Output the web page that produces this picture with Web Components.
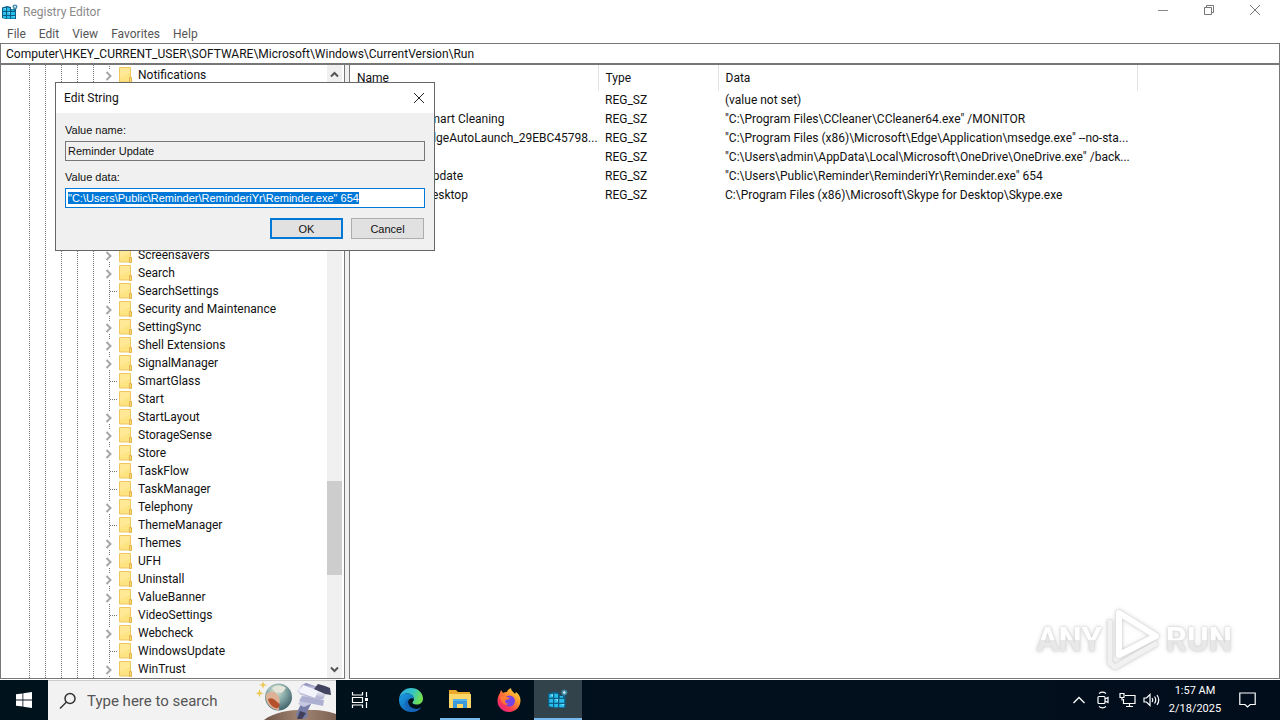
<!DOCTYPE html>
<html lang="en">
<head>
<meta charset="utf-8">
<title>Registry Editor</title>
<style>
  html, body { height: 100%; margin: 0; }
  body { font: 12px/18px Roboto, "Liberation Sans", sans-serif; color: #111; background: #fff; overflow: hidden; }
</style>
</head>
<body>
<win-desktop></win-desktop>

<template id="t-desktop">
  <style>
    :host { display: flex; flex-direction: column; height: 100vh; position: relative; }
    reg-editor { flex: 1; min-height: 0; }
    edit-dialog { position: absolute; left: 55px; top: 82px; }
    run-watermark { position: absolute; right: 48px; bottom: 44px; }
  </style>
  <reg-editor></reg-editor>
  <task-bar></task-bar>
  <run-watermark></run-watermark>
  <edit-dialog></edit-dialog>
</template>

<template id="t-editor">
  <style>
    :host { display: flex; flex-direction: column; }
    header { display: flex; align-items: center; height: 24px; padding-left: 2px; gap: 5px; color: #8a8a8a; }
    h1 { flex: 1; margin: 0; font: inherit; }
    .ctl { display: flex; gap: 1px; padding: 0 3px 4px 0; }
    .ctl button { all: unset; width: 45px; height: 20px; display: grid; place-items: center; }
    nav { display: flex; gap: 13px; height: 19px; padding-left: 7px; }
    nav button { all: unset; color: #555; line-height: 18px; }
    .addr { box-sizing: border-box; height: 21px; width: 100%; border: 1px solid #777; padding: 0 5px; font: inherit; color: #111; background: #fff; outline: none; display: block; }
    main { flex: 1; min-height: 0; display: flex; border-top: 1px solid #777; margin-bottom: 1px; background: #f0f0f0; gap: 4px; }
    key-tree { width: 345px; flex: none; box-sizing: border-box; }
    value-list { flex: 1; min-width: 0; }
  </style>
  <header>
    <reg-icon></reg-icon>
    <h1>Registry Editor</h1>
    <div class="ctl">
      <button aria-label="Minimize"><svg width="12" height="12" stroke="#888" fill="none"><path d="M1 6.500h10"/></svg></button>
      <button aria-label="Restore"><svg width="12" height="12" stroke="#777" fill="none"><path d="M1.500 3.500h7v7h-7zM3.500 3.500v-2h7v7h-2"/></svg></button>
      <button aria-label="Close"><svg width="12" height="12" stroke="#777" fill="none"><path d="M1 1l10 10M11 1L1 11"/></svg></button>
    </div>
  </header>
  <nav><button>File</button><button>Edit</button><button>View</button><button>Favorites</button><button>Help</button></nav>
  <input class="addr" aria-label="Address" value="Computer\HKEY_CURRENT_USER\SOFTWARE\Microsoft\Windows\CurrentVersion\Run">
  <main><key-tree></key-tree><value-list></value-list></main>
</template>

<template id="t-regicon">
  <style>:host { display: block; width: 16px; height: 16px; } svg { display: block; width: 100%; height: 100%; }</style>
  <svg viewBox="0 0 16 16">
    <path d="M0 3.500L5 2l4 1v2h5v10H4l-4-1z" fill="#0b5f86"/>
    <path d="M1 4.300l3-.6v3L1 7zM5 3.600l3 .3v3H5zM1 8h3v3H1zM5 8h3v3H5zM9 8h4v3H9zM1 12h3v2.300l-3-.6zM5 12h3v2.500H5zM9 12h4v2.500H9zM9.500 5.500H12V7H9.500z" fill="#28bdea"/>
    <path d="M2 4.500l2-.4v2zM6 8h2v2zM10 12h3v1z" fill="#8fe6ff"/>
    <path d="M13 0l.7 1 1.300-.2-.1 1.300 1.100.7-1.100.8.1 1.200-1.300-.1-.7 1.100-.8-1.100-1.200.1.100-1.200L10 2.800l1.100-.7-.1-1.300 1.200.2z" fill="#3f87a6"/>
    <circle cx="13" cy="2.800" r="1" fill="#dff6ff"/>
  </svg>
</template>

<template id="t-tree">
  <style>
    :host { display: flex; background: #fff; border: solid #777; border-width: 0 1px 1px; overflow: hidden; }
    ul { flex: 1; min-width: 0; margin: 0; padding: 1px 0 0 28px; list-style: none;
      background: repeating-linear-gradient(#0000 0 1px, #fff 1px 2px), repeating-linear-gradient(90deg, #777 0 1px, #fff 1px 16px);
      background-size: auto, 66px 100%; background-position: 0 0, 28px 0; background-repeat: repeat, no-repeat; }
    .gap { height: 162px; }
    .bar { width: 15px; margin-right: 2px; background: #f0f0f0; display: grid; grid-template-rows: 18px 1fr 17px; }
    .bar i { display: block; margin-top: 398px; height: 94px; background: #cdcdcd; }
    svg { display: block; margin: 5px 3px 4px; }
    svg + div + svg { margin-top: 4px; }
  </style>
  <ul></ul>
  <div class="bar">
    <svg width="9" height="9" fill="none" stroke="#555" stroke-width="2"><path d="M1 6.500l3.500-3.500L8 6.500"/></svg>
    <div><i></i></div>
    <svg width="9" height="9" fill="none" stroke="#555" stroke-width="2"><path d="M1 2.500L4.500 6 8 2.500"/></svg>
  </div>
</template>

<template id="t-key">
  <style>
    :host { display: flex; align-items: center; height: 18px; padding-left: 75px; }
    .join { width: 15px; height: 18px; display: block; flex: none; }
    .leaf, :host([leaf]) .branch { display: none; }
    :host([leaf]) .leaf { display: inline; }
    .folder { width: 14px; height: 16px; margin-right: 5px; flex: none; }
  </style>
  <svg class="join" fill="none">
    <g class="leaf" stroke="#777" stroke-dasharray="1 1"><path d="M5.500 0v18M6 9.500h8"/></g>
    <g class="branch"><path d="M5.500 0v3M5.500 16v2" stroke="#777" stroke-dasharray="1 1"/><path d="M2.500 6l4 4-4 4" stroke="#a6a6a6" stroke-width="2"/></g>
  </svg>
  <svg class="folder" viewBox="0 0 14 16">
    <path d="M.5.500h11v14.500H.5z" fill="#fee383" stroke="#efc75c"/>
    <path d="M1 1h10v5L1 11z" fill="#ffedaa" opacity=".5"/>
    <path d="M10.500 10.500h2v5h-2z" fill="#fbd970" stroke="#e2b44f"/>
  </svg>
  <slot></slot>
</template>

<template id="t-values">
  <style>
    :host { display: block; background: #fff; border: solid #777; border-width: 0 1px 1px; overflow: hidden; }
    table { table-layout: fixed; width: 788px; border-collapse: collapse; }
    th, td { font-weight: 400; text-align: left; white-space: nowrap; overflow: hidden; padding: 0 6px; line-height: 19px; height: 19px; box-sizing: border-box; }
    th { height: 26px; border-right: 1px solid #e2e2e2; padding-left: 7px; }
    td { padding-left: 7px; }
    td:first-child { padding: 0 0 0 21px; }
    .n { width: 248px; } .t { width: 120px; }
  </style>
  <table>
    <colgroup><col class="n"><col class="t"><col></colgroup>
    <thead><tr><th>Name</th><th>Type</th><th>Data</th></tr></thead>
    <tbody></tbody>
  </table>
</template>

<template id="t-dialog">
  <style>
    :host { display: block; box-sizing: border-box; width: 380px; height: 169px; border: 1px solid #666; background: #f0f0f0; }
    header { display: flex; align-items: center; justify-content: space-between; height: 30px; padding: 0 8px; background: #fff; }
    h2 { font: inherit; margin: 0; }
    button { font: inherit; color: #111; }
    header button { all: unset; width: 14px; height: 14px; display: grid; place-items: center; }
    form { font: 11px/14px "Liberation Sans", Arial, sans-serif; padding: 10px 9px 0; }
    label { display: block; margin-bottom: 4px; }
    input { display: block; box-sizing: border-box; width: 100%; height: 20px; border: 1px solid #777; padding: 0 2px; margin: 0 0 9px; font: inherit; color: #111; background: #f0f0f0; outline: none; }
    input.on { border-color: #0078d7; background: #fff; }
    input::selection { background: #0078d7; color: #fff; }
    .row { display: flex; justify-content: flex-end; gap: 8px; padding: 1px 1px 0 0; }
    .row button { width: 73px; height: 21px; padding: 0; border: 1px solid #adadad; background: #e1e1e1; border-radius: 0; }
    .row .def { border: 2px solid #0078d7; }
  </style>
  <header><h2>Edit String</h2>
    <button aria-label="Close"><svg width="12" height="12" stroke="#222" fill="none"><path d="M1 1l10 10M11 1L1 11"/></svg></button>
  </header>
  <form>
    <label for="name">Value name:</label>
    <input id="name" readonly value="Reminder Update">
    <label for="data">Value data:</label>
    <input id="data" class="on" spellcheck="false">
    <div class="row"><button type="button" class="def">OK</button><button type="button">Cancel</button></div>
  </form>
</template>

<template id="t-taskbar">
  <style>
    :host { display: flex; height: 40px; background: linear-gradient(90deg, #00131c, #020d1c); color: #fff; }
    button { all: unset; display: grid; place-items: center; width: 48px; height: 40px; box-sizing: border-box; }
    .search { display: flex; align-items: center; width: 288px; box-sizing: border-box; background: #f2f2f2; border-top: 1px solid #ccc; padding-left: 11px; }
    .search input { flex: 1; min-width: 0; border: 0; padding: 0 0 0 10px; background: none; font: 15px/20px Roboto, sans-serif; outline: none; }
    .search input::placeholder { color: #555; opacity: 1; }
    .apps { display: flex; gap: 1px; flex: 1; }
    .apps button:first-child { margin-right: 2px; }
    .open { border-bottom: 2px solid #76b9ed; width: 40px; margin: 0 4px; }
    .active { background: #33434c; border-bottom: 2px solid #76b9ed; }
    .active reg-icon { width: 20px; height: 20px; }
    .tray { display: flex; align-items: center; }
    .tray button { width: 24px; }
    .tray .clock { width: 64px; text-align: center; font-size: 11px; line-height: 18px; }
    .tray .note { width: 40px; margin-right: 13px; }
    svg { display: block; }
  </style>
  <button aria-label="Start"><svg width="16" height="16" fill="#fff"><path d="M0 2.300l6.500-.9v6.200H0zM7.300 1.300L16 0v7.600H7.300zM0 8.400h6.500v6.200L0 13.700zM7.300 8.400H16V16l-8.700-1.300z"/></svg></button>
  <div class="search">
    <svg width="18" height="18" fill="none" stroke="#333" stroke-width="1.500"><circle cx="11" cy="6.500" r="5"/><path d="M7.500 10L1 16.500"/></svg>
    <input aria-label="Search" placeholder="Type here to search">
    <svg width="80" height="39" viewBox="256 681 80 39">
      <defs>
        <radialGradient id="pl" cx=".4" cy=".3" r=".8"><stop offset="0" stop-color="#dfe8dc"/><stop offset=".4" stop-color="#8fb0ad"/><stop offset="1" stop-color="#31545e"/></radialGradient>
        <linearGradient id="hill" x1="0" x2="1"><stop offset="0" stop-color="#6f5549"/><stop offset=".5" stop-color="#a28571"/><stop offset="1" stop-color="#7d6254"/></linearGradient>
        <linearGradient id="tube" x1="0.200" y1="0" x2="0" y2="1"><stop offset="0" stop-color="#8486b5"/><stop offset=".4" stop-color="#ededf8"/><stop offset="1" stop-color="#8e90b8"/></linearGradient>
      </defs>
      <path d="M264 720c12-9 30-11 48-10 10 0 18 2 24 4v6z" fill="url(#hill)"/>
      <circle cx="278.500" cy="697" r="13.500" fill="url(#pl)"/>
      <path d="M266 695c2-3 7-5 10-2s5 7 3 11 1 4 0 6c-8 0-14-7-13-15z" fill="#dcb195"/>
      <path d="M268 699c4-2 6 0 8 2s5 3 3 6-9 0-11-8z" fill="#b5502c"/>
      <path d="M272 688c5-4 10-3 14 0-2 2-2 4-5 5-3-1-7-1-9-5z" fill="#e4e5d8"/>
      <path d="M263 681l1 3 3 1-3 1-1 3-1-3-3-1 3-1zM259.500 689l1 3 3 1.500-3 1-1 3-1-3-2.500-1 2.500-1.500z" fill="#eac95a"/>
      <path d="M302 702l9 2-4 8c2 4 0 7-5 7s-7-3-5-7z" fill="#777ba5"/>
      <path d="M300 711l6 2-4 6h-5z" fill="#40405c"/>
      <path d="M303 697l16-7 6 3-1 5-20 9-6-3z" fill="#c6c7e2"/>
      <path d="M302 685l4-2 12 4 8 6-3 6-8-1-14-3-4-4z" fill="url(#tube)"/>
      <path d="M303 685l-4 7 16 6 3-7z" fill="#f3f3fc"/>
      <path d="M299 701l24 5 1-6-22-4z" fill="#aeb0d2"/>
      <path d="M314 689l4-5 7 2 5 2 1 7-6-1z" fill="#42435f"/>
    </svg>
  </div>
  <div class="apps">
    <button aria-label="Task View"><svg width="18" height="18" fill="none" stroke="#fff" stroke-width="1.200"><path d="M1.500 1v3h10V1M1.500 6.500h10v5h-10zM1.500 17v-3h10v3M15.500 1v5M15.500 11v6"/><path d="M14 7h3v3h-3z" fill="#fff" stroke="none"/></svg></button>
    <button aria-label="Edge"><svg width="26" height="26" viewBox="0 0 26 26">
      <defs><linearGradient id="e1" x1="0" y1="0" x2="1" y2=".3"><stop offset="0" stop-color="#2fa8ea"/><stop offset=".6" stop-color="#36c6c4"/><stop offset="1" stop-color="#6fdf55"/></linearGradient>
      <linearGradient id="e2" x1="0" y1="0" x2="1" y2="1"><stop offset="0" stop-color="#1b9de2"/><stop offset="1" stop-color="#0c50a4"/></linearGradient></defs>
      <path d="M1 12C2 5 7 1 13 1c7 0 12 5 12 10.500 0 4-3 6-6.500 6-3 0-4-1-4-2 0-.8 1.500-1.500 1.500-3.500C16 9 13 6.500 9 6.500 5 6.500 2 9 1 12z" fill="url(#e1)"/>
      <path d="M1 12c1-3.500 4-5.500 8-5.500S16 9 16 12c-1.500-1.500-6-1-6 3 0 4 4 7 8 7 2 0 4-.7 5-1.500C21 23.500 17 25 13 25 6 25 .5 19.500 1 12z" fill="url(#e2)"/>
      <path d="M10 15c0 4 4 7 8 7 2 0 4-.7 5-1.500-2 3-6 4.500-10 4.500-4-2-6-5-6-8 0-2.500 1.300-4.500 4-5.500-.7.800-1 2-1 3.500z" fill="#1464b8"/>
    </svg></button>
    <button class="open" aria-label="File Explorer"><svg width="22" height="20" viewBox="0 0 22 20">
      <path d="M0 1h7l2 2h12v4H0z" fill="#eba92c"/><path d="M0 5h22v14H0z" fill="#fbd668"/><path d="M4 10h14v9h-4v-4H8v4H4z" fill="#3b9ad9"/><path d="M4 10h14v2H4z" fill="#55b3ea"/>
    </svg></button>
    <button aria-label="Firefox"><svg width="24" height="24" viewBox="0 0 24 24">
      <defs><linearGradient id="f1" x1="1" y1="0" x2=".2" y2="1"><stop offset="0" stop-color="#fff04a"/><stop offset=".4" stop-color="#ff9a2c"/><stop offset=".75" stop-color="#ff3c4e"/><stop offset="1" stop-color="#e0208a"/></linearGradient></defs>
      <path d="M3 5l1-3 2 3c1-1 3-1 4-1 0-1 2-3 4-4 0 3 3 4 4 6l1-2c3 2 4.500 5 4.500 8.500C23.500 19 18.500 24 12 24S.5 19 .5 13C.5 10 1.500 7 3 5z" fill="url(#f1)"/>
      <circle cx="12.500" cy="13" r="5.500" fill="#7542e5"/>
      <path d="M3 9c3-2 5-1 7 0l3 1c-1 2-4 1-5 3 0 2 2 3 4 2.500C9 19 4 15 3 9z" fill="#ff7a35"/>
    </svg></button>
    <button class="active" aria-label="Registry Editor"><reg-icon></reg-icon></button>
  </div>
  <div class="tray">
    <button aria-label="Show hidden icons"><svg width="12" height="8" fill="none" stroke="#fff" stroke-width="1.300"><path d="M.5 7L6 1.500 11.500 7"/></svg></button>
    <button aria-label="Meet Now"><svg width="12" height="18" fill="none" stroke="#fff" stroke-width="1.200"><rect x="1" y="5.500" width="7" height="7" rx="1"/><path d="M8 8l3-1.500v5L8 10M2 2.500c2-1.500 5-1.500 7 0M2 15.500c2 1.500 5 1.500 7 0"/></svg></button>
    <button aria-label="Network"><svg width="17" height="16" fill="none" stroke="#fff" stroke-width="1.200"><path d="M6 3.500h10v8H4.500V7M1 1.500h4v4H1zM3 5.500v3M10.500 11.500v3M7 14.500h7"/></svg></button>
    <button aria-label="Volume"><svg width="17" height="14" fill="none" stroke="#fff" stroke-width="1.200"><path d="M1 5h2.500L7 1.500v11L3.500 9H1zM9 5q1.500 2 0 4M11.500 3.500q2.500 3.500 0 7M14 2q3.500 5 0 10"/></svg></button>
    <button class="clock"><time datetime="2025-02-18T01:57">1:57 AM<br>2/18/2025</time></button>
    <button class="note" aria-label="Notifications"><svg width="17" height="17" fill="none" stroke="#fff" stroke-width="1.200"><path d="M.8 1h15.400v11.500h-5L8.500 15 6 12.500H.8z"/></svg></button>
  </div>
</template>

<template id="t-mark">
  <style>
    :host { display: flex; align-items: center; gap: 4px; height: 72px; color: #fff;
      font: 700 33px/60px Roboto, sans-serif;
      filter: drop-shadow(0 0 1px #ccc) drop-shadow(0 0 2px #ddd); }
    span { background: linear-gradient(#fff 50%, #e8e8e8 50%); -webkit-background-clip: text; background-clip: text; color: transparent; }
  </style>
  <span>ANY</span>
  <svg width="56" height="64" viewBox="2 0 56 64" fill="none" stroke-linejoin="round">
    <path d="M15 5v42l37-19z" stroke="#fff" stroke-width="6"/>
    <path d="M6 12v43l5 4 42-24" stroke="#f1f1f1" stroke-width="5"/>
  </svg>
  <span>RUN</span>
</template>

<script>
  function define(name, id, setup) {
    customElements.define(name, class extends HTMLElement {
      constructor() {
        super();
        const root = this.attachShadow({ mode: "open" });
        root.append(document.getElementById(id).content.cloneNode(true));
        if (setup) setup(root);
      }
    });
  }

  define("reg-icon", "t-regicon");
  define("reg-key", "t-key");

  // A trailing "-" marks a key without children.
  const keys = ["Notifications", null, "Screensavers", "Search", "SearchSettings-", "Security and Maintenance",
    "SettingSync", "Shell Extensions", "SignalManager", "SmartGlass-", "Start-", "StartLayout", "StorageSense",
    "Store", "TaskFlow-", "TaskManager-", "Telephony", "ThemeManager-", "Themes", "UFH", "Uninstall",
    "ValueBanner", "VideoSettings-", "Webcheck", "WindowsUpdate-", "WinTrust"];
  define("key-tree", "t-tree", root => {
    const list = root.querySelector("ul");
    for (const k of keys) {
      const li = document.createElement("li");
      if (k === null) li.className = "gap";
      else {
        const key = document.createElement("reg-key");
        key.textContent = k.replace(/-$/, "");
        if (k.endsWith("-")) key.setAttribute("leaf", "");
        li.append(key);
      }
      list.append(li);
    }
  });

  const values = [
    ["", "(value not set)"],
    ["CCleaner Smart Cleaning", "\"C:\\Program Files\\CCleaner\\CCleaner64.exe\" /MONITOR"],
    ["MicrosoftEdgeAutoLaunch_29EBC45798...", "\"C:\\Program Files (x86)\\Microsoft\\Edge\\Application\\msedge.exe\" --no-sta..."],
    ["", "\"C:\\Users\\admin\\AppData\\Local\\Microsoft\\OneDrive\\OneDrive.exe\" /back..."],
    ["Reminder Update", "\"C:\\Users\\Public\\Reminder\\ReminderiYr\\Reminder.exe\" 654"],
    ["Skype for Desktop", "C:\\Program Files (x86)\\Microsoft\\Skype for Desktop\\Skype.exe"]
  ];
  define("value-list", "t-values", root => {
    const body = root.querySelector("tbody");
    for (const [name, data] of values) {
      const row = body.insertRow();
      for (const text of [name, "REG_SZ", data]) row.insertCell().textContent = text;
    }
  });

  define("reg-editor", "t-editor");
  define("edit-dialog", "t-dialog", root => {
    const data = root.getElementById("data");
    data.value = "\"C:\\Users\\Public\\Reminder\\ReminderiYr\\Reminder.exe\" 654";
    requestAnimationFrame(() => { data.focus(); data.select(); });
  });
  define("task-bar", "t-taskbar");
  define("run-watermark", "t-mark");
  define("win-desktop", "t-desktop");
</script>
</body>
</html>
